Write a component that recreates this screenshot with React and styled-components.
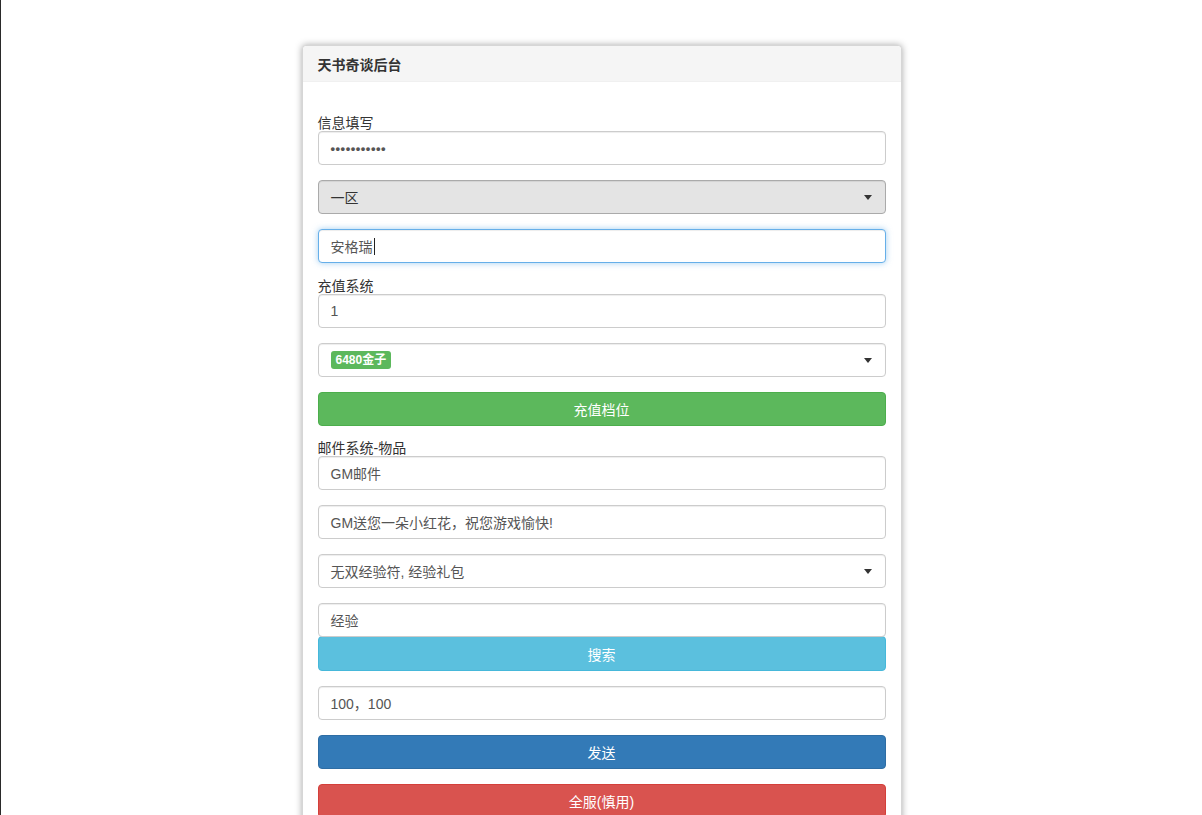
import React from "react";
import styled, { createGlobalStyle } from "styled-components";

const GlobalStyle = createGlobalStyle`
  html, body {
    margin: 0;
    padding: 0;
    background: #fff;
    overflow: hidden;
    height: 100%;
  }
  body {
    font-family: "Liberation Sans", "Noto Sans CJK SC", Arial, sans-serif;
    font-size: 14px;
    color: #333;
    border-left: 1px solid #2a2a2a;
  }
`;

const Panel = styled.div`
  width: 598px;
  margin: 45px auto 0;
  border: 1px solid #d6d6d6;
  border-radius: 4px;
  background: #fff;
  box-shadow: 0 0 7px rgba(0, 0, 0, 0.35);
`;

const Heading = styled.div`
  height: 35px;
  padding: 0 15px;
  display: flex;
  align-items: center;
  background: #f5f5f5;
  border-bottom: 1px solid #f0f0f0;
  border-radius: 4px 4px 0 0;
  font-weight: bold;
  font-size: 14px;
  color: #333;
`;

const Body = styled.div`
  padding: 33px 15px 15px;
  display: flex;
  flex-direction: column;
`;

const Label = styled.div`
  font-size: 14px;
  line-height: 16px;
  height: 16px;
  margin-top: ${(p) => (p.$afterButton ? "-1px" : "0")};
  color: #333;
`;

const Field = styled.div`
  position: relative;
  box-sizing: border-box;
  height: 34px;
  margin-bottom: ${(p) => (p.$tight ? "0" : "15px")};
  padding: 0 12px;
  display: flex;
  align-items: center;
  border: 1px solid ${(p) => (p.$focus ? "#66afe9" : p.$grey ? "#aaa" : "#ccc")};
  border-radius: 4px;
  background: ${(p) => (p.$grey ? "#e4e4e4" : "#fff")};
  color: ${(p) => (p.$grey ? "#333" : "#555")};
  font-size: 14px;
  box-shadow: ${(p) =>
    p.$focus
      ? "inset 0 1px 1px rgba(0,0,0,.075), 0 0 6px rgba(102,175,233,.6)"
      : "inset 0 1px 1px rgba(0,0,0,.075)"};
`;

const Dots = styled.span`
  letter-spacing: 0.5px;
  font-size: 13px;
  font-weight: bold;
  color: #555;
`;

const Caret = styled.span`
  display: inline-block;
  width: 1px;
  height: 17px;
  background: #222;
  margin-left: 1px;
`;

const Arrow = styled.span`
  position: absolute;
  right: 13px;
  top: 50%;
  margin-top: -2px;
  width: 0;
  height: 0;
  border-left: 4px solid transparent;
  border-right: 4px solid transparent;
  border-top: 5px solid #333;
`;

const Badge = styled.span`
  display: inline-block;
  background: #5cb85c;
  color: #fff;
  font-weight: bold;
  font-size: 12px;
  line-height: 18px;
  padding: 0 5px;
  border-radius: 3px;
`;

const colors = {
  success: ["#5cb85c", "#4cae4c"],
  info: ["#5bc0de", "#46b8da"],
  primary: ["#337ab7", "#2e6da4"],
  danger: ["#d9534f", "#d43f3a"],
};

const Button = styled.div`
  box-sizing: border-box;
  height: ${(p) => (p.$tall ? "35px" : "34px")};
  margin-top: ${(p) => (p.$tall ? "-1px" : "0")};
  margin-bottom: 15px;
  display: flex;
  align-items: center;
  justify-content: center;
  border: 1px solid ${(p) => colors[p.$kind][1]};
  border-radius: 4px;
  background: ${(p) => colors[p.$kind][0]};
  color: #fff;
  font-size: 14px;
`;

export default function App() {
  return (
    <>
      <GlobalStyle />
      <Panel>
        <Heading>天书奇谈后台</Heading>
        <Body>
          <Label>信息填写</Label>
          <Field>
            <Dots>•••••••••••</Dots>
          </Field>
          <Field $grey>
            一区
            <Arrow />
          </Field>
          <Field $focus>
            安格瑞
            <Caret />
          </Field>

          <Label>充值系统</Label>
          <Field>1</Field>
          <Field>
            <Badge>6480金子</Badge>
            <Arrow />
          </Field>
          <Button $kind="success">充值档位</Button>

          <Label $afterButton>邮件系统-物品</Label>
          <Field>GM邮件</Field>
          <Field>GM送您一朵小红花，祝您游戏愉快!</Field>
          <Field>
            无双经验符, 经验礼包
            <Arrow />
          </Field>
          <Field $tight>经验</Field>
          <Button $kind="info" $tall>搜索</Button>
          <Field>100，100</Field>
          <Button $kind="primary">发送</Button>
          <Button $kind="danger">全服(慎用)</Button>
        </Body>
      </Panel>
    </>
  );
}
